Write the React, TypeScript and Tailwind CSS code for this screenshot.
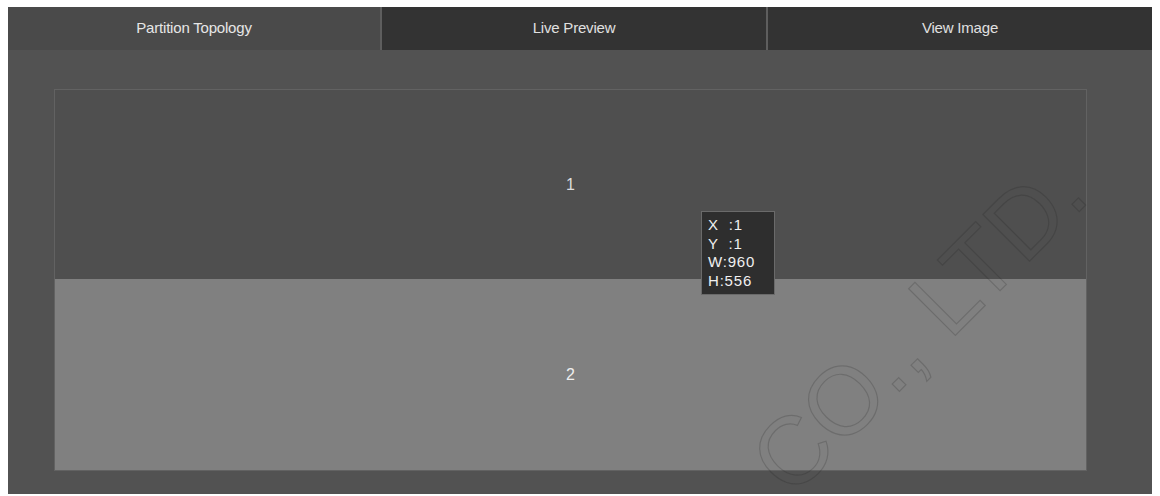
const font = { fontFamily: '"Liberation Sans", Arial, sans-serif' }

const tabs = [
  { label: 'Partition Topology', active: true },
  { label: 'Live Preview', active: false },
  { label: 'View Image', active: false },
]

/** 분할 영역 정보 툴팁 */
function RegionTooltip() {
  const rows = [
    ['X', '  :', '1'],
    ['Y', '  :', '1'],
    ['W', ':', '960'],
    ['H', ':', '556'],
  ]
  return (
    <div className="absolute left-[646px] top-[121px] w-[74px] border border-[#6a6a6a] bg-[#2e2e2e] px-[6px] py-[4px] text-[15px] leading-[18.5px] text-[#f0f0f0]">
      {rows.map(([k, sep, v]) => (
        <div key={k} className="whitespace-pre tracking-[0.8px]">
          {k}
          {sep}
          {v}
        </div>
      ))}
    </div>
  )
}

export default function App() {
  return (
    <div className="h-[496px] w-[1160px] bg-white pt-[7px] pl-[8px]" style={font}>
      <div className="flex h-[487px] w-[1144px] flex-col bg-[#525252]">
        {/* 탭 */}
        <div className="flex h-[43px] shrink-0">
          {tabs.map((tab, i) => (
            <div
              key={tab.label}
              className={
                (tab.active
                  ? 'w-[372px] bg-[#4a4a4a] text-[#e6e6e6] '
                  : 'flex-1 bg-[#333333] text-[#e0e0e0] ') +
                (i > 0 ? 'border-l-2 border-[#5e5e5e] ' : '') +
                'flex items-center justify-center text-[15px] tracking-[-0.2px]'
              }
            >
              {tab.label}
            </div>
          ))}
        </div>

        {/* 토폴로지 */}
        <div className="relative flex-1 overflow-hidden pt-[39px] pl-[46px]">
          <div className="relative flex h-[382px] w-[1033px] flex-col border border-[#626262]">
            <div className="flex h-[189px] items-center justify-center bg-[#4f4f4f] text-[16px] text-[#dcdcdc]">
              1
            </div>
            <div className="flex flex-1 items-center justify-center bg-[#808080] text-[16px] text-[#eeeeee]">
              2
            </div>
            <RegionTooltip />
          </div>

          {/* 워터마크 */}
          <div className="pointer-events-none absolute left-[760px] top-[378px] origin-left -rotate-45 whitespace-nowrap text-[96px] leading-none text-transparent [-webkit-text-stroke:1.2px_rgba(30,30,30,0.2)]">
            CO., LTD.
          </div>
        </div>
      </div>
    </div>
  )
}
